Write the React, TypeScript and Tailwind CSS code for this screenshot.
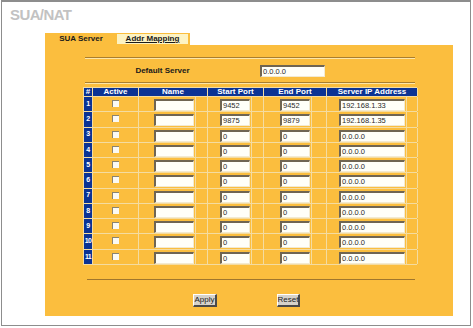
import React from "react";

type Row = { n: number; start: string; end: string; ip: string };

const rows: Row[] = [
  { n: 1, start: "9452", end: "9452", ip: "192.168.1.33" },
  { n: 2, start: "9875", end: "9879", ip: "192.168.1.35" },
  ...Array.from({ length: 9 }, (_, i) => ({ n: i + 3, start: "0", end: "0", ip: "0.0.0.0" })),
];

function Field({ w, value }: { w: string; value?: string }) {
  return (
    <div
      className={`${w} h-[12px] bg-[#fffff8] border-t-2 border-l-2 border-t-[#6f6552] border-l-[#6f6552] border-b border-r border-b-[#f3ead0] border-r-[#f3ead0] text-[7.5px] leading-[9px] text-[#2a2a2a] pl-[1px] overflow-hidden whitespace-nowrap`}
    >
      {value}
    </div>
  );
}

function Groove() {
  return <div className="h-[2px] border-t border-t-[#a97e2e] border-b border-b-[#fde6a8]" />;
}

function Btn({ label, w }: { label: string; w: string }) {
  return (
    <div
      className={`${w} h-[13px] bg-[#d6d2ca] border-t border-l border-t-white border-l-white border-b-2 border-r-2 border-b-[#4a4a4a] border-r-[#4a4a4a] flex items-center justify-center text-[8px] text-[#222]`}
    >
      {label}
    </div>
  );
}

export default function App() {
  return (
    <div
      className="w-[473px] h-[328px] bg-white overflow-hidden pl-[1px]"
      style={{ fontFamily: '"Liberation Sans", Arial, sans-serif' }}
    >
      <div className="w-[470px] h-[326px] border-t-2 border-l border-r border-b border-[#8d8d8d]">
        <div className="h-[31px] pl-[8px] pt-[5px] text-[15px] leading-[15px] font-bold text-[#c2c2c2] tracking-[-0.6px]">
          SUA/NAT
        </div>
        <div className="ml-[43px] w-[408px]">
          <div className="flex h-[12px]">
            <div className="w-[72px] bg-[#fbbe3e] flex items-center justify-center text-[8px] font-bold text-[#1a1a1a]">
              SUA Server
            </div>
            <div className="w-[73px] bg-[#fbbe3e] pt-[1px] pr-[2px] pb-[1px]">
              <div className="h-full bg-[#fdf3c3] flex items-center justify-center text-[8px] font-bold underline text-[#1a1a1a]">
                Addr Mapping
              </div>
            </div>
          </div>
          <div className="h-[271px] bg-[#fbbe3e] pt-[12px]">
            <div className="ml-[40px] w-[330px]">
              <Groove />
            </div>
            <div className="flex items-center h-[11px] mt-[6px] ml-[40px]">
              <div className="w-[155px] text-center text-[8px] font-bold text-[#1a1a1a]">Default Server</div>
              <div className="ml-[20px]">
                <Field w="w-[65px]" value="0.0.0.0" />
              </div>
            </div>
            <div className="ml-[40px] w-[330px] mt-[6px]">
              <Groove />
            </div>
            <div className="ml-[38px] w-[334px] mt-[3px] border-l border-[#f4dca0]">
              <div className="grid grid-cols-[9px_46px_69px_56px_63px_91px] h-[10px] border-t border-b border-[#f4dca0] text-[8px] font-bold text-white leading-[8px]">
                <div className="bg-[#0b3394] border-r border-[#f4dca0] flex items-center justify-center">#</div>
                <div className="bg-[#0b3394] border-r border-[#f4dca0] flex items-center justify-center">Active</div>
                <div className="bg-[#0b3394] border-r border-[#f4dca0] flex items-center justify-center">Name</div>
                <div className="bg-[#0b3394] border-r border-[#f4dca0] flex items-center justify-center">Start Port</div>
                <div className="bg-[#0b3394] border-r border-[#f4dca0] flex items-center justify-center">End Port</div>
                <div className="bg-[#0b3394] border-r border-[#f4dca0] flex items-center justify-center">Server IP Address</div>
              </div>
              {rows.map((r) => (
                <div
                  key={r.n}
                  className="grid grid-cols-[9px_46px_69px_56px_63px_91px] h-[15.27px] border-b border-[#f4dca0]"
                >
                  <div className="bg-[#0b3394] border-r border-[#f4dca0] flex items-center justify-center text-[7px] font-bold text-white tracking-[-0.6px] overflow-hidden">
                    {r.n}
                  </div>
                  <div className="border-r border-[#f4dca0] flex items-start justify-center pt-[3px]">
                    <div className="w-[7px] h-[7px] bg-[#fbfaf4] border-t border-l border-[#8a836f]" />
                  </div>
                  <div className="flex border-r border-[#f4dca0]">
                    <div className="pl-[15px] pr-[1px] pt-[2px] border-r border-[#f4dca0]">
                      <Field w="w-[40px]" />
                    </div>
                  </div>
                  <div className="flex border-r border-[#f4dca0]">
                    <div className="pl-[12px] pr-[1px] pt-[2px] border-r border-[#f4dca0]">
                      <Field w="w-[30px]" value={r.start} />
                    </div>
                  </div>
                  <div className="flex border-r border-[#f4dca0]">
                    <div className="pl-[16px] pr-[1px] pt-[2px] border-r border-[#f4dca0]">
                      <Field w="w-[30px]" value={r.end} />
                    </div>
                  </div>
                  <div className="flex border-r border-[#f4dca0]">
                    <div className="pl-[12px] pr-[1px] pt-[2px] border-r border-[#f4dca0]">
                      <Field w="w-[66px]" value={r.ip} />
                    </div>
                  </div>
                </div>
              ))}
            </div>
            <div className="ml-[42px] w-[328px] mt-[14px]">
              <div className="h-[1px] bg-[#a0762c]" />
            </div>
            <div className="flex mt-[14px] ml-[148px]">
              <Btn label="Apply" w="w-[24px]" />
              <div className="ml-[60px]">
                <Btn label="Reset" w="w-[23px]" />
              </div>
            </div>
          </div>
        </div>
      </div>
    </div>
  );
}
